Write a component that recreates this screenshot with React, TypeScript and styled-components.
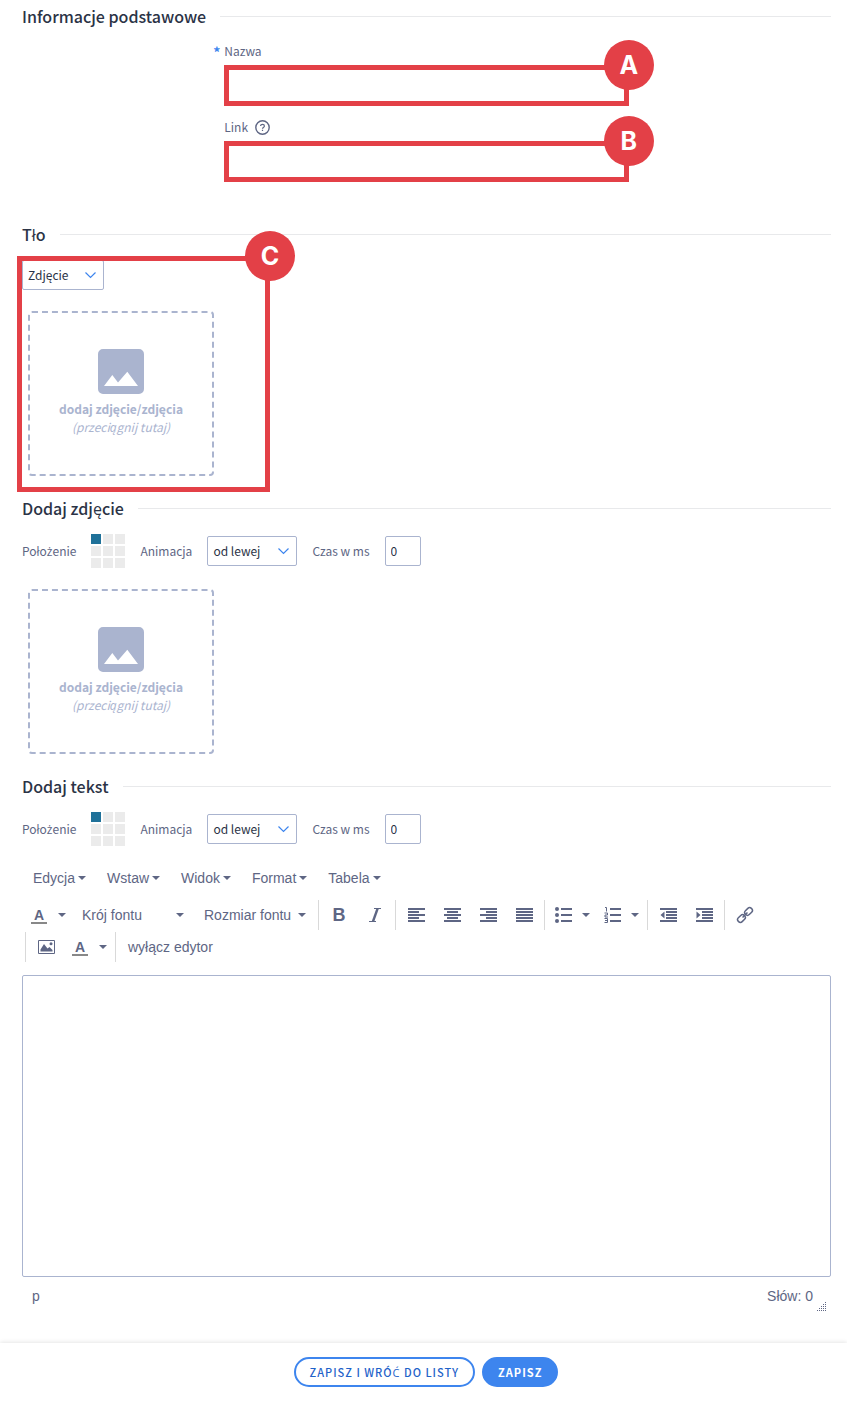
import React, { useState } from 'react';
import styled, { createGlobalStyle, css } from 'styled-components';

const sans = `"Source Sans Pro", "Noto Sans CJK SC", "Open Sans", sans-serif`;
const arial = `Arial, "Liberation Sans", sans-serif`;

const c = {
  text: '#5e6684',
  dark: '#2b3346',
  border: '#aab4cf',
  line: '#e8e9eb',
  blue: '#3d85ee',
  red: '#e34047',
};

const Global = createGlobalStyle`
  *, *::before, *::after { box-sizing: border-box; }
  body { margin: 0; background: #fff; color: ${c.text}; font: 12px/20px ${sans}; }
  button, input, select, textarea { font: inherit; color: inherit; margin: 0; }
  button { cursor: pointer; }
`;

const Main = styled.main`
  padding: 4px 16px 28px 22px;
`;

const Section = styled.section<{ $gap?: number }>`
  margin-bottom: ${(p) => p.$gap ?? 20}px;
`;

const Heading = styled.h2`
  display: flex;
  align-items: center;
  gap: 14px;
  margin: 0 0 14px;
  color: ${c.dark};
  font-size: 16px;
  font-weight: 500;
  line-height: 24px;

  &::after {
    content: '';
    flex: 1;
    height: 1px;
    background: ${c.line};
  }
`;

const Letter = styled.span`
  font-family: "Open Sans", "Noto Sans", sans-serif;
  line-height: 1;
`;

const Fields = styled.div`
  display: grid;
  gap: 12px;
  width: 50%;
  margin-left: 25%;
`;

const FieldLabel = styled.label<{ $required?: boolean }>`
  position: relative;
  display: flex;
  align-items: center;
  gap: 7px;
  height: 23px;
  padding-bottom: 5px;

  ${(p) =>
    p.$required &&
    css`
      &::before {
        content: '*';
        position: absolute;
        left: -11px;
        top: 0;
        color: ${c.blue};
        font-size: 14px;
        font-weight: 700;
      }
    `}
`;

const Marked = styled.div`
  position: relative;
`;

const TextInput = styled.input`
  display: block;
  width: 100%;
  height: 41px;
  padding: 0 12px;
  border: 1px solid ${c.border};
  border-radius: 2px;
  background: #fff;
`;

const Frame = styled.div<{ $area?: boolean }>`
  position: absolute;
  inset: 0;
  border: 5px solid ${c.red};
  pointer-events: none;

  ${(p) =>
    p.$area &&
    css`
      inset: -4px auto -16px -5px;
      width: 253px;
    `}
`;

const Badge = styled.span`
  position: absolute;
  top: -30px;
  right: -30px;
  display: grid;
  place-items: center;
  width: 50px;
  height: 50px;
  border-radius: 50%;
  background: ${c.red};
  color: #fff;
  font: 700 25px/50px Inter, sans-serif;
`;

const SelectBox = styled.span<{ $width: number }>`
  position: relative;
  display: block;
  width: ${(p) => p.$width}px;

  svg {
    position: absolute;
    right: 8px;
    top: 12px;
    pointer-events: none;
  }
`;

const boxed = css`
  height: 30px;
  border: 1px solid ${c.border};
  border-radius: 2px;
  background: #fff;
  color: ${c.dark};
`;

const Select = styled.select`
  ${boxed}
  display: block;
  appearance: none;
  width: 100%;
  padding: 0 20px 0 5px;
`;

const NumberInput = styled.input`
  ${boxed}
  width: 36px;
  padding: 0 5px 2px;
`;

const Controls = styled.div`
  display: flex;
  flex-wrap: wrap;
  align-items: center;
  gap: 15px;
`;

const PositionGrid = styled.div`
  display: grid;
  grid-template-columns: repeat(3, 10px);
  gap: 2px;
`;

const Cell = styled.input`
  appearance: none;
  width: 10px;
  height: 10px;
  background: #ebebeb;
  cursor: pointer;

  &:checked {
    background: #1f7199;
  }
`;

const DropZone = styled.button`
  display: flex;
  flex-direction: column;
  align-items: center;
  justify-content: center;
  width: 186px;
  height: 165px;
  margin: 21px 0 0 6px;
  padding: 0 0 2px;
  border: 2px dashed ${c.border};
  border-radius: 4px;
  background: transparent;
  color: ${c.border};
  line-height: 18px;

  svg {
    margin-bottom: 6px;
  }
`;

const MenuBar = styled.div`
  display: flex;
  flex-wrap: wrap;
  gap: 21px;
  margin: 21px 0 11px 11px;
`;

const MenuButton = styled.button`
  display: flex;
  align-items: center;
  gap: 3px;
  height: 22px;
  padding: 0;
  border: 0;
  background: none;
  font: 14px/22px ${arial};
`;

const Toolbar = styled.div`
  display: flex;
  flex-wrap: wrap;
  row-gap: 2px;
  padding-left: 3px;
`;

const Group = styled.div`
  display: flex;
  height: 30px;
  padding: 0 2px;
  border-left: 1px solid #d9d9d9;

  &:first-child {
    margin-left: -2px;
    padding-left: 0;
    border-left: 0;
  }
`;

const Tool = styled.button`
  display: flex;
  align-items: center;
  justify-content: center;
  width: 36px;
  padding: 0;
  border: 0;
  background: none;
  font: 14px/30px ${arial};
`;

const SplitTool = styled(Tool)`
  justify-content: space-between;
  width: 49px;
  padding: 0 6px 0 8px;
`;

const ListTool = styled(Tool)`
  justify-content: space-between;
  width: 122px;
  padding: 0 10px;
`;

const TextTool = styled(Tool)`
  width: auto;
  padding: 0 10px;
`;

const Bold = styled.b`
  font: 700 18px/30px ${arial};
`;

const ColorLetter = styled.span`
  width: 16px;
  padding-top: 2px;
  border-bottom: 2px solid #888;
  font-weight: 700;
  line-height: 14px;
  text-align: center;
`;

const EditArea = styled.textarea`
  display: block;
  width: 100%;
  height: 302px;
  margin-top: 13px;
  padding: 10px;
  border: 1px solid ${c.border};
  border-radius: 2px;
  background: #fff;
  resize: none;
  font: 14px/20px ${arial};
`;

const StatusBar = styled.div`
  position: relative;
  display: flex;
  align-items: center;
  justify-content: space-between;
  height: 38px;
  padding: 0 18px 0 10px;
  font: 14px/20px ${arial};

  svg {
    position: absolute;
    right: 4px;
    bottom: 4px;
  }
`;

const Footer = styled.footer`
  display: flex;
  justify-content: center;
  gap: 7px;
  padding: 14px 17px 14px 22px;
  background: #fff;
  box-shadow: 0 -1px 4px rgba(0, 0, 0, 0.1);
`;

const Action = styled.button<{ $primary?: boolean }>`
  height: 30px;
  padding: 0 14px;
  border: 2px solid ${c.blue};
  border-radius: 15px;
  background: ${(p) => (p.$primary ? c.blue : '#fff')};
  color: ${(p) => (p.$primary ? '#fff' : '#1f62c9')};
  font-size: 11px;
  font-weight: ${(p) => (p.$primary ? 700 : 500)};
  line-height: 26px;
  letter-spacing: 1px;
  text-transform: uppercase;
`;

const Caret = () => (
  <svg width="8" height="4" viewBox="0 0 8 4" aria-hidden="true">
    <path d="M0 0h8L4 4z" fill="currentColor" />
  </svg>
);

const Chevron = () => (
  <svg width="11" height="7" viewBox="0 0 11 7" aria-hidden="true">
    <path d="M.5.5l5 5 5-5" fill="none" stroke={c.blue} strokeWidth="1.2" />
  </svg>
);

const HelpIcon = () => (
  <svg width="15" height="15" viewBox="0 0 15 15" fill="none" stroke="currentColor" aria-hidden="true">
    <circle cx="7.5" cy="7.5" r="6.7" strokeWidth="1.4" />
    <path d="M5.6 6.1c0-2.4 3.8-2.3 3.8-.1 0 1.4-1.9 1.4-1.9 2.7M7.5 9.8v1.3" strokeWidth="1.2" />
  </svg>
);

const PictureIcon = () => (
  <svg width="46" height="45" viewBox="0 0 46 45" aria-hidden="true">
    <path
      fill="currentColor"
      fillRule="evenodd"
      d="M5 0h36a5 5 0 0 1 5 5v35a5 5 0 0 1-5 5H5a5 5 0 0 1-5-5V5a5 5 0 0 1 5-5zM6 37h34L29.300 22.700 20 33.500 14.300 26z"
    />
  </svg>
);

const Lines = ({ d }: { d: string }) => (
  <svg width="18" height="14" viewBox="-1 0 18 14" aria-hidden="true">
    <path d={d} fill="currentColor" />
  </svg>
);

const ItalicIcon = () => (
  <svg width="14" height="14" viewBox="0 0 14 14" aria-hidden="true">
    <path d="M6 .5h7M1 13.500h7" stroke="currentColor" strokeWidth="1.200" />
    <path d="M9.800 0L4.800 14" stroke="currentColor" strokeWidth="2.400" />
  </svg>
);

const ALIGN = [
  ['Wyrównaj do lewej', 'M0 0h17v2H0zM0 3h11v2H0zM0 6h17v2H0zM0 9h11v2H0zM0 12h17v2H0z'],
  ['Wyśrodkuj', 'M0 0h17v2H0zM3 3h11v2H3zM0 6h17v2H0zM3 9h11v2H3zM0 12h17v2H0z'],
  ['Wyrównaj do prawej', 'M0 0h17v2H0zM6 3h11v2H6zM0 6h17v2H0zM6 9h11v2H6zM0 12h17v2H0z'],
  ['Wyjustuj', 'M0 0h17v2H0zM0 3h17v2H0zM0 6h17v2H0zM0 9h17v2H0zM0 12h17v2H0z'],
];

const INDENT = [
  ['Zmniejsz wcięcie', 'M0 0h17v2H0zM6 3h11v2H6zM6 6h11v2H6zM6 9h11v2H6zM0 12h17v2H0zM4.500 3.500v7L.5 7z'],
  ['Zwiększ wcięcie', 'M0 0h17v2H0zM6 3h11v2H6zM6 6h11v2H6zM6 9h11v2H6zM0 12h17v2H0zM.5 3.500v7l4-3.500z'],
];

const BulletIcon = () => (
  <svg width="17" height="16" viewBox="0 0 17 16" fill="currentColor" aria-hidden="true">
    <circle cx="2" cy="2" r="2" />
    <circle cx="2" cy="8" r="2" />
    <circle cx="2" cy="14" r="2" />
    <path d="M6 1h11v2H6zM6 7h11v2H6zM6 13h11v2H6z" />
  </svg>
);

const NumberIcon = () => (
  <svg width="17" height="16" viewBox="0 0 17 16" fill="none" stroke="currentColor" aria-hidden="true">
    <path d="M6 2h11M6 8h11M6 14h11" strokeWidth="2" />
    <path d="M1 .5h1.500V4.500M.5 6h3v2h-2.500v2h3M.5 11.500h3v4h-3M1 13.500h2.500" />
  </svg>
);

const LinkIcon = () => (
  <svg width="18" height="18" viewBox="-.5 -.5 18 18" fill="none" stroke="currentColor" strokeWidth="1.500" aria-hidden="true">
    <g transform="rotate(-45 8.500 8.500)">
      <rect x="-.7" y="5.800" width="8.400" height="5.400" rx="2.500" />
      <rect x="9.300" y="5.800" width="8.400" height="5.400" rx="2.500" />
      <path d="M5 8.500h7" />
    </g>
  </svg>
);

const ImageIcon = () => (
  <svg width="18" height="14" viewBox="-1 0 18 14" aria-hidden="true">
    <path d="M.5.5h16v13H.5z" fill="none" stroke="currentColor" />
    <path d="M2.500 11.500V9.500L6 4l3.500 4.500L11.500 7l3 3v1.500z" fill="currentColor" />
    <circle cx="13" cy="3.800" r="1.500" fill="currentColor" />
  </svg>
);

const Grip = () => (
  <svg width="10" height="9" viewBox="0 0 10 9" shapeRendering="crispEdges" aria-hidden="true">
    {[0, 1, 2, 3, 4].map((row) =>
      Array.from({ length: row + 1 }, (_, i) => (
        <rect key={`${row}-${i}`} x={8 - i * 2} y={row * 2} width="1" height="1" fill="currentColor" />
      )),
    )}
  </svg>
);

const ImageDrop = () => (
  <DropZone type="button">
    <PictureIcon />
    <strong>dodaj zdjęcie/zdjęcia</strong>
    <em>(przeciągnij tutaj)</em>
  </DropZone>
);

function LayerControls({ id }: { id: string }) {
  const [cell, setCell] = useState(0);
  return (
    <Controls>
      <span id={`${id}-position`}>
        Poło<Letter>ż</Letter>enie
      </span>
      <PositionGrid role="radiogroup" aria-labelledby={`${id}-position`}>
        {Array.from({ length: 9 }, (_, i) => (
          <Cell
            key={i}
            type="radio"
            name={`${id}-position`}
            aria-label={`${i + 1}`}
            checked={cell === i}
            onChange={() => setCell(i)}
          />
        ))}
      </PositionGrid>
      <label htmlFor={`${id}-animation`}>Animacja</label>
      <SelectBox $width={90}>
        <Select id={`${id}-animation`}>
          <option>od lewej</option>
        </Select>
        <Chevron />
      </SelectBox>
      <label htmlFor={`${id}-time`}>Czas w ms</label>
      <NumberInput id={`${id}-time`} type="text" inputMode="numeric" defaultValue="0" />
    </Controls>
  );
}

export default function App() {
  return (
    <>
      <Global />
      <Main>
        <Section $gap={40}>
          <Heading>Informacje podstawowe</Heading>
          <Fields>
            <div>
              <FieldLabel htmlFor="name" $required>
                Nazwa
              </FieldLabel>
              <Marked>
                <TextInput id="name" type="text" />
                <Frame>
                  <Badge>A</Badge>
                </Frame>
              </Marked>
            </div>
            <div>
              <FieldLabel htmlFor="link">
                Link <HelpIcon />
              </FieldLabel>
              <Marked>
                <TextInput id="link" type="text" />
                <Frame>
                  <Badge>B</Badge>
                </Frame>
              </Marked>
            </div>
          </Fields>
        </Section>

        <Section>
          <Heading>Tło</Heading>
          <Marked>
            <SelectBox $width={82}>
              <Select aria-label="Tło">
                <option>Zdjęcie</option>
              </Select>
              <Chevron />
            </SelectBox>
            <ImageDrop />
            <Frame $area>
              <Badge>C</Badge>
            </Frame>
          </Marked>
        </Section>

        <Section>
          <Heading>Dodaj zdjęcie</Heading>
          <LayerControls id="image" />
          <ImageDrop />
        </Section>

        <Section $gap={0}>
          <Heading>Dodaj tekst</Heading>
          <LayerControls id="text" />
          <MenuBar>
            {['Edycja', 'Wstaw', 'Widok', 'Format', 'Tabela'].map((name) => (
              <MenuButton key={name} type="button">
                {name}
                <Caret />
              </MenuButton>
            ))}
          </MenuBar>
          <Toolbar>
            <Group>
              <SplitTool type="button" aria-label="Kolor tekstu">
                <ColorLetter>A</ColorLetter>
                <Caret />
              </SplitTool>
              <ListTool type="button">
                Krój fontu
                <Caret />
              </ListTool>
              <ListTool type="button">
                Rozmiar fontu
                <Caret />
              </ListTool>
            </Group>
            <Group>
              <Tool type="button" aria-label="Pogrubienie">
                <Bold>B</Bold>
              </Tool>
              <Tool type="button" aria-label="Kursywa">
                <ItalicIcon />
              </Tool>
            </Group>
            <Group>
              {ALIGN.map(([name, d]) => (
                <Tool key={name} type="button" aria-label={name}>
                  <Lines d={d} />
                </Tool>
              ))}
            </Group>
            <Group>
              <SplitTool type="button" aria-label="Lista wypunktowana">
                <BulletIcon />
                <Caret />
              </SplitTool>
              <SplitTool type="button" aria-label="Lista numerowana">
                <NumberIcon />
                <Caret />
              </SplitTool>
            </Group>
            <Group>
              {INDENT.map(([name, d]) => (
                <Tool key={name} type="button" aria-label={name}>
                  <Lines d={d} />
                </Tool>
              ))}
            </Group>
            <Group>
              <Tool type="button" aria-label="Wstaw link">
                <LinkIcon />
              </Tool>
            </Group>
            <Group>
              <Tool type="button" aria-label="Wstaw obraz">
                <ImageIcon />
              </Tool>
              <SplitTool type="button" aria-label="Kolor tła">
                <ColorLetter>A</ColorLetter>
                <Caret />
              </SplitTool>
            </Group>
            <Group>
              <TextTool type="button">wyłącz edytor</TextTool>
            </Group>
          </Toolbar>
          <EditArea aria-label="Tekst" />
          <StatusBar>
            <span>p</span>
            <span>Słów: 0</span>
            <Grip />
          </StatusBar>
        </Section>
      </Main>
      <Footer>
        <Action type="button">
          Zapisz i wró<Letter>ć</Letter> do listy
        </Action>
        <Action type="submit" $primary>
          Zapisz
        </Action>
      </Footer>
    </>
  );
}
